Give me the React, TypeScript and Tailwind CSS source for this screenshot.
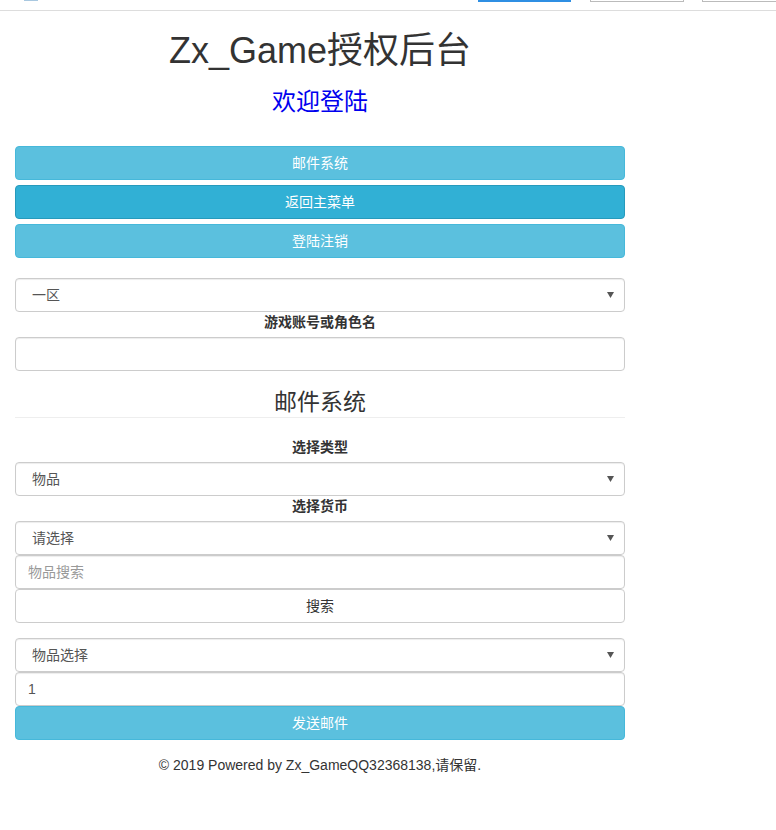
import React, { useState } from 'react';

const font = { fontFamily: '"Liberation Sans", Arial, "Noto Sans CJK SC", sans-serif' };

// small dropdown arrow used by the selects
const Caret = () => (
  <svg className="pointer-events-none absolute right-[11px] top-[14px]" width="7" height="6" viewBox="0 0 7 6">
    <path d="M0 0 L7 0 L3.5 6 Z" fill="#555" />
  </svg>
);

interface SelectProps {
  value: string;
  options: string[];
  onChange: (v: string) => void;
}

const Select: React.FC<SelectProps> = ({ value, options, onChange }) => (
  <div className="relative">
    <select
      value={value}
      onChange={(e) => onChange(e.target.value)}
      className="block h-[34px] w-full appearance-none rounded-[4px] border border-[#ccc] bg-white pl-[16px] pr-[24px] text-[14px] text-[#555] shadow-[inset_0_1px_1px_rgba(0,0,0,0.075)] outline-none"
      style={font}
    >
      {options.map((o) => (
        <option key={o} value={o}>
          {o}
        </option>
      ))}
    </select>
    <Caret />
  </div>
);

const inputCls =
  'block h-[34px] w-full rounded-[4px] border border-[#ccc] bg-white px-[12px] text-[14px] text-[#555] placeholder:text-[#999] shadow-[inset_0_1px_1px_rgba(0,0,0,0.075)] outline-none';

const Label: React.FC<{ children: React.ReactNode }> = ({ children }) => (
  <label className="mb-[5px] block text-center text-[14px] font-bold leading-[20px] text-[#333]">{children}</label>
);

export default function App() {
  const [zone, setZone] = useState('一区');
  const [type, setType] = useState('物品');
  const [currency, setCurrency] = useState('请选择');
  const [item, setItem] = useState('物品选择');
  const [count, setCount] = useState('1');

  return (
    <div className="min-h-[830px] bg-white text-[14px] text-[#333]" style={font}>
      {/* scrolled-off navbar remains */}
      <div className="flex h-[11px] items-start border-b border-[#ddd]">
        <div className="ml-[24px] h-[1px] w-[14px] bg-[#a9c8e0]" />
        <div className="ml-[440px] h-[2px] w-[93px] bg-[#2f8fe3]" />
        <div className="ml-[19px] h-[2px] w-[94px] border-x border-b border-[#bbb]" />
        <div className="ml-[18px] h-[2px] flex-1 border-l border-b border-[#bbb]" />
      </div>

      <div className="ml-[15px] w-[610px]">
        <h1 className="mt-[20px] text-center text-[36px] font-normal leading-[40px] text-[#333]">Zx_Game授权后台</h1>
        <h3 className="mt-[18px] text-center text-[24px] leading-[26px] text-[#0000ee]">欢迎登陆</h3>

        <div className="mt-[31px] flex flex-col gap-[5px]">
          <button className="h-[34px] w-full rounded-[4px] border border-[#46b8da] bg-[#5bc0de] text-[14px] text-white">
            邮件系统
          </button>
          <button className="h-[34px] w-full rounded-[4px] border border-[#269abc] bg-[#31b0d5] text-[14px] text-white">
            返回主菜单
          </button>
          <button className="h-[34px] w-full rounded-[4px] border border-[#46b8da] bg-[#5bc0de] text-[14px] text-white">
            登陆注销
          </button>
        </div>

        <div className="mt-[20px]">
          <Select value={zone} options={['一区', '二区', '三区']} onChange={setZone} />
        </div>
        <div>
          <Label>游戏账号或角色名</Label>
          <input className={inputCls} style={font} />
        </div>

        <div className="mt-[18px] border-b border-[#eee] pb-[2px]">
          <h3 className="text-center text-[23px] font-normal leading-[26px] text-[#333]">邮件系统</h3>
        </div>

        <div className="mt-[19px]">
          <Label>选择类型</Label>
          <Select value={type} options={['物品', '货币']} onChange={setType} />
        </div>
        <div>
          <Label>选择货币</Label>
          <Select value={currency} options={['请选择', '元宝', '金币']} onChange={setCurrency} />
        </div>
        <input className={inputCls} style={font} placeholder="物品搜索" />
        <button className="block h-[34px] w-full rounded-[4px] border border-[#ccc] bg-white text-[14px] text-[#333]">
          搜索
        </button>

        <div className="mt-[15px]">
          <Select value={item} options={['物品选择']} onChange={setItem} />
        </div>
        <input className={inputCls} style={font} value={count} onChange={(e) => setCount(e.target.value)} />
        <button className="block h-[34px] w-full rounded-[4px] border border-[#46b8da] bg-[#5bc0de] text-[14px] text-white">
          发送邮件
        </button>

        <p className="mt-[15px] text-center text-[14px] leading-[20px] text-[#333]">
          © 2019 Powered by Zx_GameQQ32368138,请保留.
        </p>
      </div>
    </div>
  );
}
